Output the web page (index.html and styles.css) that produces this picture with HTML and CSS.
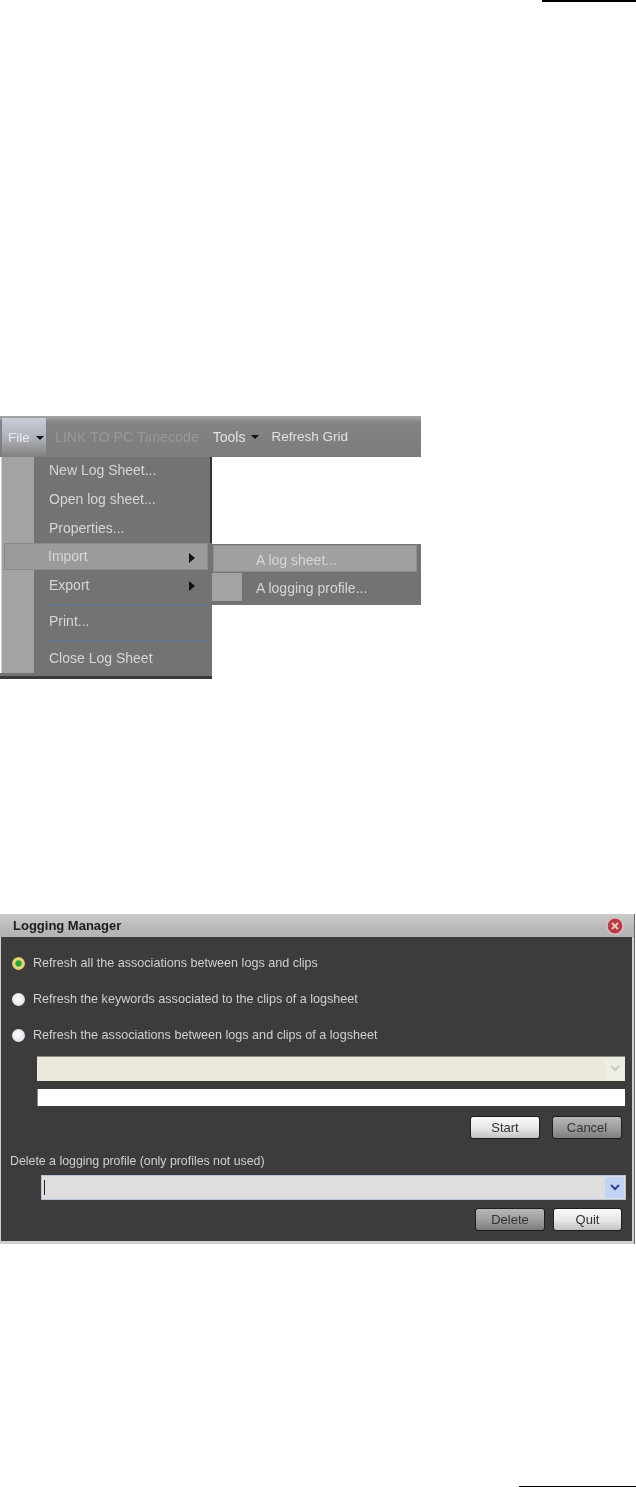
FILE: index.html
```html
<!DOCTYPE html>
<html lang="en">
<head>
    <meta charset="UTF-8">
    <meta name="viewport" content="width=device-width, initial-scale=1.0">
    <title>Logging Manager</title>
    <link rel="stylesheet" href="styles.css">
</head>
<body>
    <div class="rule rule-top"></div>

    <!-- File menu capture -->
    <section class="menu-shot">
        <div class="menu-bar">
            <div class="bar-item bar-file">File <span class="caret"></span></div>
            <div class="bar-item bar-disabled">LINK TO PC Timecode</div>
            <div class="bar-item bar-tools">Tools <span class="caret"></span></div>
            <div class="bar-item bar-refresh">Refresh Grid</div>
        </div>
        <div class="menu-canvas"></div>

        <ul class="dropdown">
            <li class="menu-item item-first">New Log Sheet...</li>
            <li class="menu-item">Open log sheet...</li>
            <li class="menu-item">Properties...</li>
            <li class="menu-item item-active">Import<span class="arrow"></span></li>
            <li class="menu-item item-export">Export<span class="arrow"></span></li>
            <li class="menu-sep"></li>
            <li class="menu-item item-print">Print...</li>
            <li class="menu-sep menu-sep-low"></li>
            <li class="menu-item item-close">Close Log Sheet</li>
        </ul>

        <ul class="submenu">
            <li class="sub-item sub-active">A log sheet...</li>
            <li class="sub-item sub-profile">A logging profile...</li>
        </ul>
    </section>

    <!-- Logging manager dialog capture -->
    <section class="dialog">
        <div class="title-bar">
            <span class="title-text">Logging Manager</span>
            <svg class="close-icon" width="18" height="18" viewBox="0 0 18 18">
                <circle cx="9" cy="9" r="8" fill="#b93a48" stroke="#e6c8c8" stroke-width="1.2"/>
                <path d="M6 6l6 6M12 6l-6 6" stroke="#e8c8b8" stroke-width="2"/>
            </svg>
        </div>
        <div class="dialog-body">
            <label class="radio-row"><span class="radio radio-on"></span>Refresh all the associations between logs and clips</label>
            <label class="radio-row"><span class="radio"></span>Refresh the keywords associated to the clips of a logsheet</label>
            <label class="radio-row"><span class="radio"></span>Refresh the associations between logs and clips of a logsheet</label>

            <div class="combo combo-disabled">
                <span class="combo-btn">
                    <svg width="12" height="8" viewBox="0 0 12 8"><path d="M2 1l4 4 4-4" fill="none" stroke="#c9c9c0" stroke-width="2"/></svg>
                </span>
            </div>
            <div class="progress"></div>
            <div class="btn-row btn-row-start">
                <button class="btn">Start</button>
                <button class="btn btn-dim">Cancel</button>
            </div>

            <p class="delete-label">Delete a logging profile (only profiles not used)</p>
            <div class="combo combo-profile">
                <span class="text-cursor"></span>
                <span class="combo-btn combo-btn-blue">
                    <svg width="12" height="8" viewBox="0 0 12 8"><path d="M2 1l4 4 4-4" fill="none" stroke="#2b4a8c" stroke-width="2"/></svg>
                </span>
            </div>
            <div class="btn-row btn-row-quit">
                <button class="btn btn-dim">Delete</button>
                <button class="btn btn-quit">Quit</button>
            </div>
        </div>
    </section>

    <div class="rule rule-bottom"></div>
</body>
</html>
```

FILE: styles.css
```css
/* Page */
body, p, ul {
    margin: 0;
    padding: 0;
}

body {
    width: 636px;
    height: 1487px;
    background: #fff;
    font-family: 'Liberation Sans', Arial, sans-serif;
    font-size: 13px;
    display: flex;
    flex-direction: column;
    overflow: hidden;
}

ul {
    list-style: none;
}

.rule {
    height: 2px;
    background: #000;
    align-self: flex-end;
}

.rule-top {
    width: 94px;
}

.rule-bottom {
    width: 117px;
    margin-top: auto;
    height: 1px;
}

/* File menu capture */
.menu-shot {
    position: relative;
    width: 421px;
    height: 264px;
    margin-top: 414px;
    filter: blur(0.5px);
}

.menu-bar {
    height: 41px;
    background: linear-gradient(#a6a6a6 0, #848484 6px, #7c7c7c 100%);
    display: flex;
    align-items: center;
    color: #e2e2e2;
    font-size: 13.5px;
}

.bar-item {
    white-space: nowrap;
    display: flex;
    align-items: center;
}

.bar-file {
    width: 44px;
    height: 39px;
    margin: 2px 0 0 2px;
    padding-left: 6px;
    box-sizing: border-box;
    background: linear-gradient(#c8cdd8, #aeb2ba 50%, #808080);
    color: #e8eaee;
}

.bar-disabled {
    margin-left: 9px;
    color: #989898;
    font-size: 14.2px;
}

.bar-tools {
    margin-left: 14px;
    font-size: 14px;
}

.bar-refresh {
    margin-left: 12px;
}

.caret {
    width: 0;
    height: 0;
    margin-left: 6px;
    border-left: 4px solid transparent;
    border-right: 4px solid transparent;
    border-top: 4px solid #111;
}

.menu-canvas {
    height: 223px;
    background: #fff;
}

.dropdown {
    position: absolute;
    left: 0;
    top: 41px;
    width: 212px;
    height: 222px;
    box-sizing: border-box;
    padding: 0 0 0 34px;
    background: linear-gradient(90deg, #fff 0, #fff 1px, #a3a3a3 2px, #a3a3a3 34px, #737373 34px) no-repeat top left / 100% 216px, #737373;
    border-bottom: 3px solid #3a3a3a;
    color: #d6d6d6;
    font-size: 14px;
}

/* dark edge only shows above the open submenu */
.dropdown::after {
    content: '';
    position: absolute;
    right: 0;
    top: 0;
    width: 2px;
    height: 86px;
    background: #333;
}

.menu-item {
    height: 29px;
    line-height: 29px;
    padding-left: 15px;
    position: relative;
}

.item-first {
    height: 28px;
    line-height: 27px;
}

.item-active {
    box-sizing: border-box;
    margin-left: -30px;
    margin-right: 4px;
    padding-left: 43px;
    height: 27px;
    line-height: 25px;
    background: #9b9b9b;
    border: 1px solid #8a8a8a;
}

.item-export {
    line-height: 31px;
}

.arrow {
    position: absolute;
    right: 17px;
    top: 11px;
    width: 0;
    height: 0;
    border-top: 5px solid transparent;
    border-bottom: 5px solid transparent;
    border-left: 6px solid #111;
}

.item-active .arrow {
    right: 12px;
    top: 9px;
}

.menu-sep {
    height: 2px;
    margin: 5px 0 0 10px;
    background: #66758a;
}

.menu-sep-low {
    margin-top: 4px;
}

.item-print {
    height: 30px;
    line-height: 30px;
}

.item-close {
    height: 32px;
    line-height: 32px;
}

.submenu {
    position: absolute;
    left: 212px;
    top: 128px;
    width: 209px;
    height: 61px;
    background: #737373;
    color: #d6d6d6;
    font-size: 14px;
}

.sub-item {
    height: 28px;
    line-height: 31px;
    padding-left: 44px;
}

.sub-active {
    box-sizing: border-box;
    height: 27px;
    margin: 1px 4px 1px 1px;
    padding-left: 42px;
    line-height: 29px;
    background: #a0a0a0;
    border: 1px solid #8e8e8e;
}

.sub-profile {
    margin-top: 1px;
    background: linear-gradient(90deg, #a3a3a3 0, #a3a3a3 30px, transparent 30px);
}

/* Logging manager dialog capture */
.dialog {
    width: 635px;
    height: 330px;
    margin-top: 234px;
    background: #cfcfcf;
    border-right: 1px solid #666;
    box-sizing: border-box;
    display: flex;
    flex-direction: column;
    filter: blur(0.5px);
}

.title-bar {
    height: 23px;
    flex: none;
    display: flex;
    align-items: center;
    justify-content: space-between;
    padding: 0 10px 0 13px;
    background: linear-gradient(#cccccc, #bababa 55%, #b2b2b2);
    box-sizing: border-box;
}

.title-text {
    font-weight: bold;
    font-size: 13px;
    color: #1c1c1c;
}

.dialog-body {
    flex: 1;
    margin: 0 2px 3px 1px;
    padding-top: 8px;
    display: flex;
    flex-direction: column;
    background: #3c3c3c;
    color: #d0d0d0;
}

.radio-row {
    height: 36px;
    display: flex;
    align-items: center;
    gap: 8px;
    padding-left: 11px;
    font-size: 12.6px;
}

.radio {
    width: 13px;
    height: 13px;
    border-radius: 50%;
    flex: none;
    background: radial-gradient(circle at 45% 45%, #fff, #e4e8ee 60%, #a8b4c4);
}

.radio-on {
    background: radial-gradient(circle, #2f9e30 0, #2f9e30 28%, #e6e09a 42%, #e2bc5c 70%, #b5823a);
}

.combo {
    height: 25px;
    box-sizing: border-box;
    display: flex;
    align-items: center;
    justify-content: flex-end;
    position: relative;
}

.combo-disabled {
    margin: 3px 7px 0 36px;
    background: #ece9da;
    border-top: 1px solid #8a8a80;
}

.combo-btn {
    width: 19px;
    height: 21px;
    margin-right: 1px;
    display: flex;
    align-items: center;
    justify-content: center;
    background: #efeee4;
}

.combo-btn-blue {
    background: #c3d3f4;
}

.progress {
    height: 17px;
    margin: 8px 7px 0 36px;
    background: #fff;
    border-left: 1px solid #888;
}

.btn-row {
    display: flex;
    justify-content: flex-end;
    gap: 12px;
    padding-right: 10px;
}

.btn-row-start {
    margin-top: 10px;
}

.btn-row-quit {
    margin-top: 8px;
    gap: 8px;
}

.btn {
    width: 70px;
    height: 23px;
    padding: 0;
    font-family: inherit;
    font-size: 13px;
    color: #333;
    background: linear-gradient(#fafafa, #e6e6e6 55%, #c2c2c2);
    border: 1px solid #1e1e1e;
    border-radius: 3px;
}

.btn-dim {
    background: linear-gradient(#b8b8b8, #9c9c9c 55%, #7d7d7d);
}

.btn-quit {
    width: 69px;
}

.delete-label {
    margin: 11px 0 0 9px;
    font-size: 12.35px;
    height: 22px;
    line-height: 22px;
}

.combo-profile {
    margin: 3px 6px 0 40px;
    background: #dedede;
    border: 1px solid #b8c4d6;
}

.text-cursor {
    position: absolute;
    left: 2px;
    top: 4px;
    width: 1px;
    height: 15px;
    background: #222;
}
```
